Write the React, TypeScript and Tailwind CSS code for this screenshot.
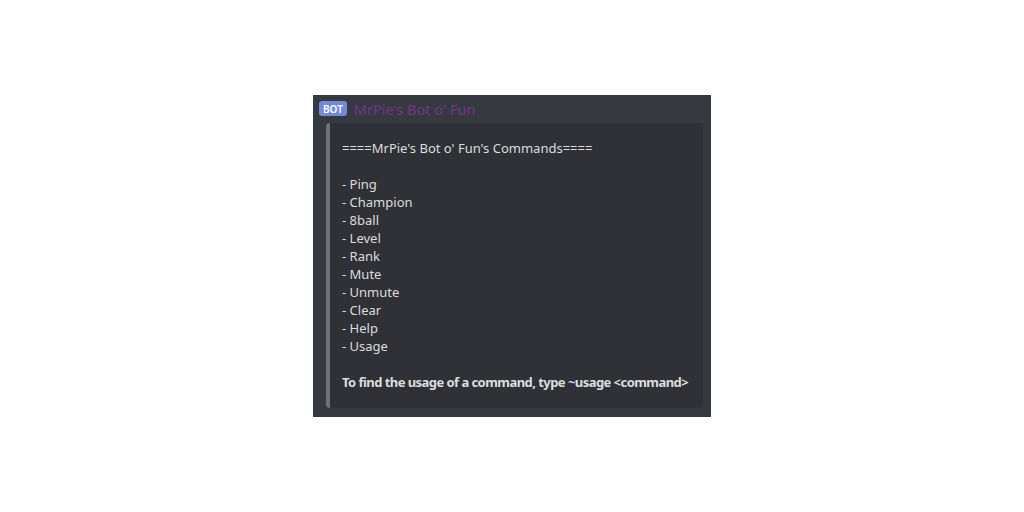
const commands = ['Ping', 'Champion', '8ball', 'Level', 'Rank', 'Mute', 'Unmute', 'Clear', 'Help', 'Usage'];

export default function App() {
  return (
    <div className="flex h-[512px] w-[1024px] items-center justify-center bg-white" style={{ fontFamily: '"Noto Sans", sans-serif' }}>
      <div className="flex h-[322px] w-[398px] flex-col bg-[#36393f] pb-[9px] pl-[6px] pr-[8px] pt-[6px]">
        <div className="flex h-[22px] items-start gap-[7px]">
          <span className="flex h-[15px] items-center rounded-[3px] bg-[#7289da] px-[4px] text-[10px] font-semibold leading-none text-white">
            BOT
          </span>
          <span className="-mt-[2px] text-[14.5px] leading-[20px] text-[#71368a]">MrPie's Bot o' Fun</span>
        </div>
        <div className="ml-[7px] flex flex-1 rounded-[4px] border-l-4 border-[#6f7277] bg-[#2f3136] pl-[12px] pt-[16px] text-[13px] leading-[18px] text-[#dcddde]">
          <div className="whitespace-nowrap">
            <p>====MrPie's Bot o' Fun's Commands====</p>
            <p>&nbsp;</p>
            {commands.map((c) => (
              <p key={c}>- {c}</p>
            ))}
            <p>&nbsp;</p>
            <p className="font-bold tracking-[-0.55px]">To find the usage of a command, type ~usage &lt;command&gt;</p>
          </div>
        </div>
      </div>
    </div>
  );
}
